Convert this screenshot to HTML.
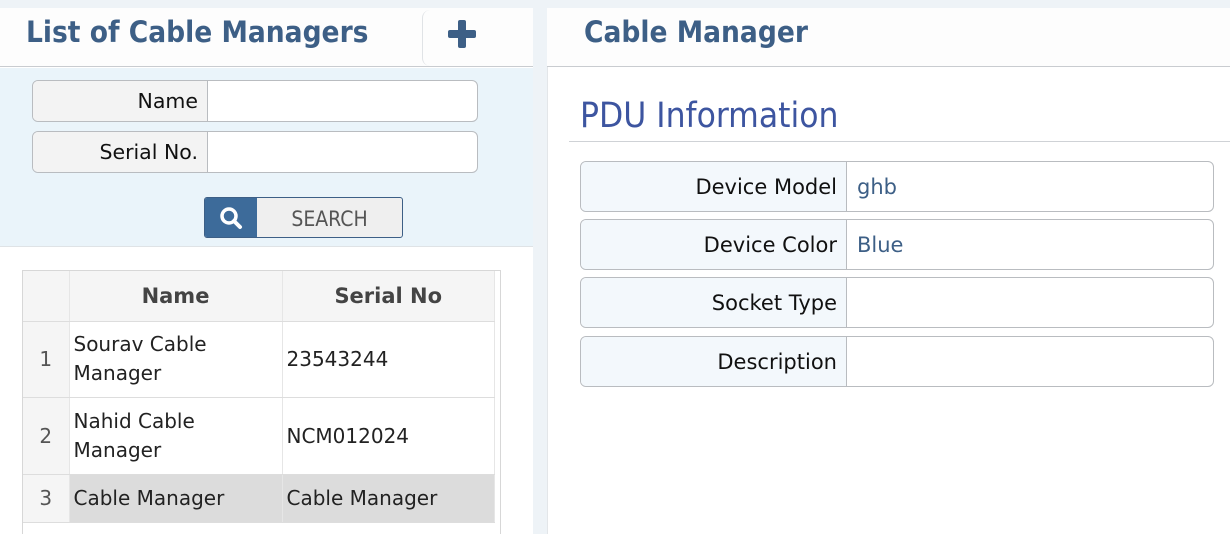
<!DOCTYPE html>
<html><head><meta charset="utf-8"><style>
*{box-sizing:border-box;margin:0;padding:0}
body{width:1230px;height:534px;overflow:hidden;background:#eef3f7;font-family:"DejaVu Sans","Liberation Sans",sans-serif;position:relative}
.a{position:absolute}
.title{font-family:"DejaVu Sans Condensed","DejaVu Sans",sans-serif;font-weight:bold;color:#3d5f86;font-size:29.5px;white-space:nowrap}
.grp{position:absolute;border:1px solid #b9bcc0;border-radius:6px;background:#fff;overflow:hidden;display:flex}
.grp .k{background:#f3f3f3;border-right:1px solid #b9bcc0;text-align:right;color:#111;padding-right:9px;display:flex;align-items:center;justify-content:flex-end;font-size:20.5px}
.pgrp .k{background:#f3f8fc;font-size:21px}
.pgrp .v{font-size:21px;color:#3d5f86;padding-left:10px;display:flex;align-items:center}
td{font-size:20px;color:#222;border-right:1px solid #e6e6e6;border-bottom:1px solid #ddd;padding:0 4px}
</style></head><body>
<div class="a" style="left:0;top:8px;width:533px;height:526px;background:#fff"></div>
<div class="a" style="left:0;top:8px;width:533px;height:59px;background:#fdfdfd;border-bottom:1px solid #c9ccd0"></div>
<div class="a title" style="left:26px;top:15px;">List of Cable Managers</div>
<div class="a" style="left:422px;top:10px;width:111px;height:56px;border-left:1px solid #e0e3e6;border-radius:8px 0 0 8px"></div>
<div class="a" style="left:448px;top:30px;width:28px;height:8px;background:#3d5f86;border-radius:2px"></div>
<div class="a" style="left:458px;top:20px;width:8px;height:28px;background:#3d5f86;border-radius:2px"></div>
<div class="a" style="left:0;top:68px;width:533px;height:179px;background:#eaf4fa;border-bottom:1px solid #dfe3e6"></div>
<div class="grp" style="left:32px;top:80px;width:446px;height:42px"><div class="k" style="width:175px">Name</div></div>
<div class="grp" style="left:32px;top:131px;width:446px;height:42px"><div class="k" style="width:175px">Serial No.</div></div>
<div class="a" style="left:204px;top:197px;width:199px;height:41px;border:1px solid #3d5f86;border-radius:3px;background:#efefef;display:flex;overflow:hidden">
 <div style="width:52px;background:#3d6b9a;display:flex;align-items:center;justify-content:center">
 <svg width="26" height="26" viewBox="0 0 26 26"><circle cx="11" cy="11" r="7" fill="none" stroke="#fff" stroke-width="3.5"/><path d="M16 16l6 6" stroke="#fff" stroke-width="4" stroke-linecap="round"/></svg></div>
 <div style="flex:1;text-align:center;line-height:42px;font-size:21px;color:#555;font-family:'DejaVu Sans Condensed','DejaVu Sans',sans-serif">SEARCH</div>
</div>
<div class="a" style="left:22px;top:270px;width:479px;height:264px;border:1px solid #d7d7d7;border-bottom:none;background:#fff"></div>
<table class="a" style="left:23px;top:271px;width:472px;border-collapse:collapse">
<tr style="height:50px;background:#f5f5f5"><td style="width:46px"></td><td style="width:213px;text-align:center;font-weight:bold;color:#444;font-size:21px">Name</td><td style="text-align:center;font-weight:bold;color:#444;font-size:21px">Serial No</td></tr>
<tr style="height:76px"><td style="background:#f5f5f5;text-align:center;color:#555">1</td><td style="line-height:29px">Sourav Cable<br>Manager</td><td>23543244</td></tr>
<tr style="height:77px"><td style="background:#f5f5f5;text-align:center;color:#555">2</td><td style="line-height:29px">Nahid Cable<br>Manager</td><td>NCM012024</td></tr>
<tr style="height:48px;background:#dcdcdc"><td style="background:#f5f5f5;text-align:center;color:#555">3</td><td>Cable Manager</td><td>Cable Manager</td></tr>
</table>
<div class="a" style="left:547px;top:8px;width:683px;height:526px;background:#fff;border-left:1px solid #e3e6e9"></div>
<div class="a" style="left:547px;top:8px;width:683px;height:59px;background:#fdfdfd;border-bottom:1px solid #c9ccd0"></div>
<div class="a title" style="left:584px;top:15px;">Cable Manager</div>
<div class="a" style="left:580px;top:96px;font-family:'DejaVu Sans Condensed','DejaVu Sans',sans-serif;font-size:35px;color:#3d55a0;white-space:nowrap">PDU Information</div>
<div class="a" style="left:569px;top:141px;width:661px;height:1px;background:#cfd2d6"></div>
<div class="grp pgrp" style="left:580px;top:161px;width:634px;height:51px"><div class="k" style="width:266px">Device Model</div><div class="v">ghb</div></div>
<div class="grp pgrp" style="left:580px;top:219px;width:634px;height:51px"><div class="k" style="width:266px">Device Color</div><div class="v">Blue</div></div>
<div class="grp pgrp" style="left:580px;top:277px;width:634px;height:51px"><div class="k" style="width:266px">Socket Type</div><div class="v"></div></div>
<div class="grp pgrp" style="left:580px;top:336px;width:634px;height:51px"><div class="k" style="width:266px">Description</div><div class="v"></div></div>
</body></html>
